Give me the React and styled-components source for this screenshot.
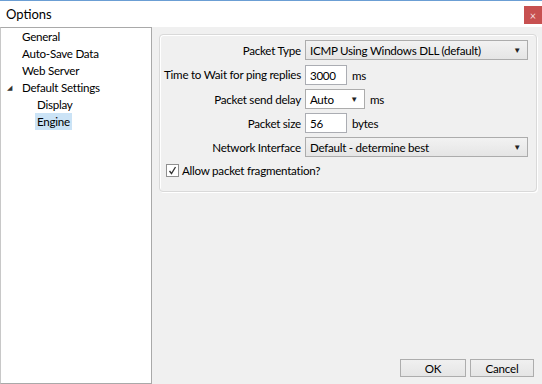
import styled, { createGlobalStyle } from "styled-components";

const GlobalStyle = createGlobalStyle`
  html, body {
    margin: 0;
    padding: 0;
    background: #ffffff;
  }
  body {
    font-family: Lato, "Noto Sans", sans-serif;
    font-size: 11.6px;
    letter-spacing: -0.25px;
    color: #000;
  }
`;

const Window = styled.div`
  width: 542px;
  height: 384px;
  display: flex;
  flex-direction: column;
  border-top: 1px solid #6b9ed4;
  box-sizing: border-box;
  overflow: hidden;
`;

const TitleBar = styled.div`
  height: 26px;
  flex-shrink: 0;
  display: flex;
  align-items: flex-start;
  justify-content: space-between;
  background: #ffffff;
  padding-left: 6px;
  font-size: 13px;
  letter-spacing: 0;
`;

const Title = styled.span`
  margin-top: 5px;
`;

const CloseButton = styled.div`
  flex: 0 0 18px;
  min-width: 18px;
  height: 18px;
  margin-top: 5px;
  background: #c75050;
  color: #f4dede;
  font-size: 11px;
  line-height: 1;
  display: flex;
  align-items: center;
  justify-content: center;
`;

const Body = styled.div`
  flex: 1;
  display: flex;
  background: #f0f0f0;
  min-height: 0;
`;

const Tree = styled.ul`
  list-style: none;
  margin: 0;
  padding: 0;
  width: 152px;
  box-sizing: border-box;
  background: #ffffff;
  border: 1px solid #a9a9a9;
  border-left-color: #c8c8c8;
`;

const TreeItem = styled.li`
  height: 17px;
  display: flex;
  align-items: center;
  padding-left: ${(p) => p.$indent}px;
`;

const Expander = styled.span`
  width: 13px;
  font-size: 7px;
  color: #333;
`;

const ItemLabel = styled.span`
  padding: 0 2px;
  line-height: 17px;
  background: ${(p) => (p.$selected ? "#cbe3f6" : "transparent")};
`;

const Main = styled.div`
  flex: 1;
  display: flex;
  flex-direction: column;
  padding: 7px 5px 7px 7px;
`;

const GroupBox = styled.div`
  border: 1px solid #d9d9d9;
  border-radius: 4px;
  box-shadow: inset 1px 1px 0 #ffffff, 1px 1px 0 #ffffff;
  padding: 5px 8px 12px 4px;
  display: grid;
  grid-template-columns: auto 1fr;
  column-gap: 4px;
  row-gap: 4px;
  align-items: center;
`;

const FieldLabel = styled.div`
  text-align: right;
  white-space: nowrap;
`;

const Control = styled.div`
  display: flex;
  align-items: center;
  gap: 5px;
  ${(p) => p.$spaced && "margin-top: 1px;"}
`;

const Select = styled.div`
  height: 20px;
  width: ${(p) => (p.$width ? `${p.$width}px` : "100%")};
  box-sizing: border-box;
  border: 1px solid #acacac;
  background: ${(p) => (p.$white ? "#ffffff" : "linear-gradient(#f2f2f2, #e5e5e5)")};
  display: flex;
  align-items: center;
  justify-content: space-between;
  padding: 0 6px 0 4px;
  white-space: nowrap;
`;

const Arrow = styled.span`
  font-size: 8px;
  color: #222;
`;

const TextBox = styled.div`
  height: 20px;
  width: 42px;
  box-sizing: border-box;
  border: 1px solid #abadb3;
  background: #fff;
  display: flex;
  align-items: center;
  padding-left: 4px;
`;

const CheckRow = styled.label`
  grid-column: 1 / span 2;
  display: flex;
  align-items: center;
  gap: 3px;
  padding-left: 2px;
  height: 18px;
`;

const CheckBox = styled.span`
  width: 11px;
  height: 11px;
  border: 1px solid #8f8f8f;
  background: #fff;
  display: flex;
  align-items: center;
  justify-content: center;
`;

const ButtonRow = styled.div`
  margin-top: auto;
  display: flex;
  justify-content: flex-end;
  gap: 4px;
  padding-right: 3px;
`;

const Button = styled.div`
  width: ${(p) => p.$width}px;
  height: 18px;
  box-sizing: border-box;
  border: 1px solid #adadad;
  background: linear-gradient(#f0f0f0, #e5e5e5);
  display: flex;
  align-items: center;
  justify-content: center;
`;

const Check = () => (
  <svg width="9" height="9" viewBox="0 0 9 9">
    <path d="M1.5 5 L3.5 7.5 L7.5 1" stroke="#333" strokeWidth="1.3" fill="none" />
  </svg>
);

const App = () => {
  return (
    <>
      <GlobalStyle />
      <Window>
        <TitleBar>
          <Title>Options</Title>
          <CloseButton>×</CloseButton>
        </TitleBar>
        <Body>
          <Tree>
            <TreeItem $indent={19}><ItemLabel>General</ItemLabel></TreeItem>
            <TreeItem $indent={19}><ItemLabel>Auto-Save Data</ItemLabel></TreeItem>
            <TreeItem $indent={19}><ItemLabel>Web Server</ItemLabel></TreeItem>
            <TreeItem $indent={6}>
              <Expander>◢</Expander>
              <ItemLabel>Default Settings</ItemLabel>
            </TreeItem>
            <TreeItem $indent={34}><ItemLabel>Display</ItemLabel></TreeItem>
            <TreeItem $indent={34}><ItemLabel $selected>Engine</ItemLabel></TreeItem>
          </Tree>
          <Main>
            <GroupBox>
              <FieldLabel>Packet Type</FieldLabel>
              <Control>
                <Select>
                  <span>ICMP Using Windows DLL (default)</span>
                  <Arrow>▼</Arrow>
                </Select>
              </Control>
              <FieldLabel>Time to Wait for ping replies</FieldLabel>
              <Control $spaced>
                <TextBox>3000</TextBox>
                <span>ms</span>
              </Control>
              <FieldLabel>Packet send delay</FieldLabel>
              <Control>
                <Select $width={60} $white>
                  <span>Auto</span>
                  <Arrow>▼</Arrow>
                </Select>
                <span>ms</span>
              </Control>
              <FieldLabel>Packet size</FieldLabel>
              <Control>
                <TextBox>56</TextBox>
                <span>bytes</span>
              </Control>
              <FieldLabel>Network Interface</FieldLabel>
              <Control>
                <Select>
                  <span>Default - determine best</span>
                  <Arrow>▼</Arrow>
                </Select>
              </Control>
              <CheckRow>
                <CheckBox><Check /></CheckBox>
                <span>Allow packet fragmentation?</span>
              </CheckRow>
            </GroupBox>
            <ButtonRow>
              <Button $width={66}>OK</Button>
              <Button $width={64}>Cancel</Button>
            </ButtonRow>
          </Main>
        </Body>
      </Window>
    </>
  );
};

export default App;
